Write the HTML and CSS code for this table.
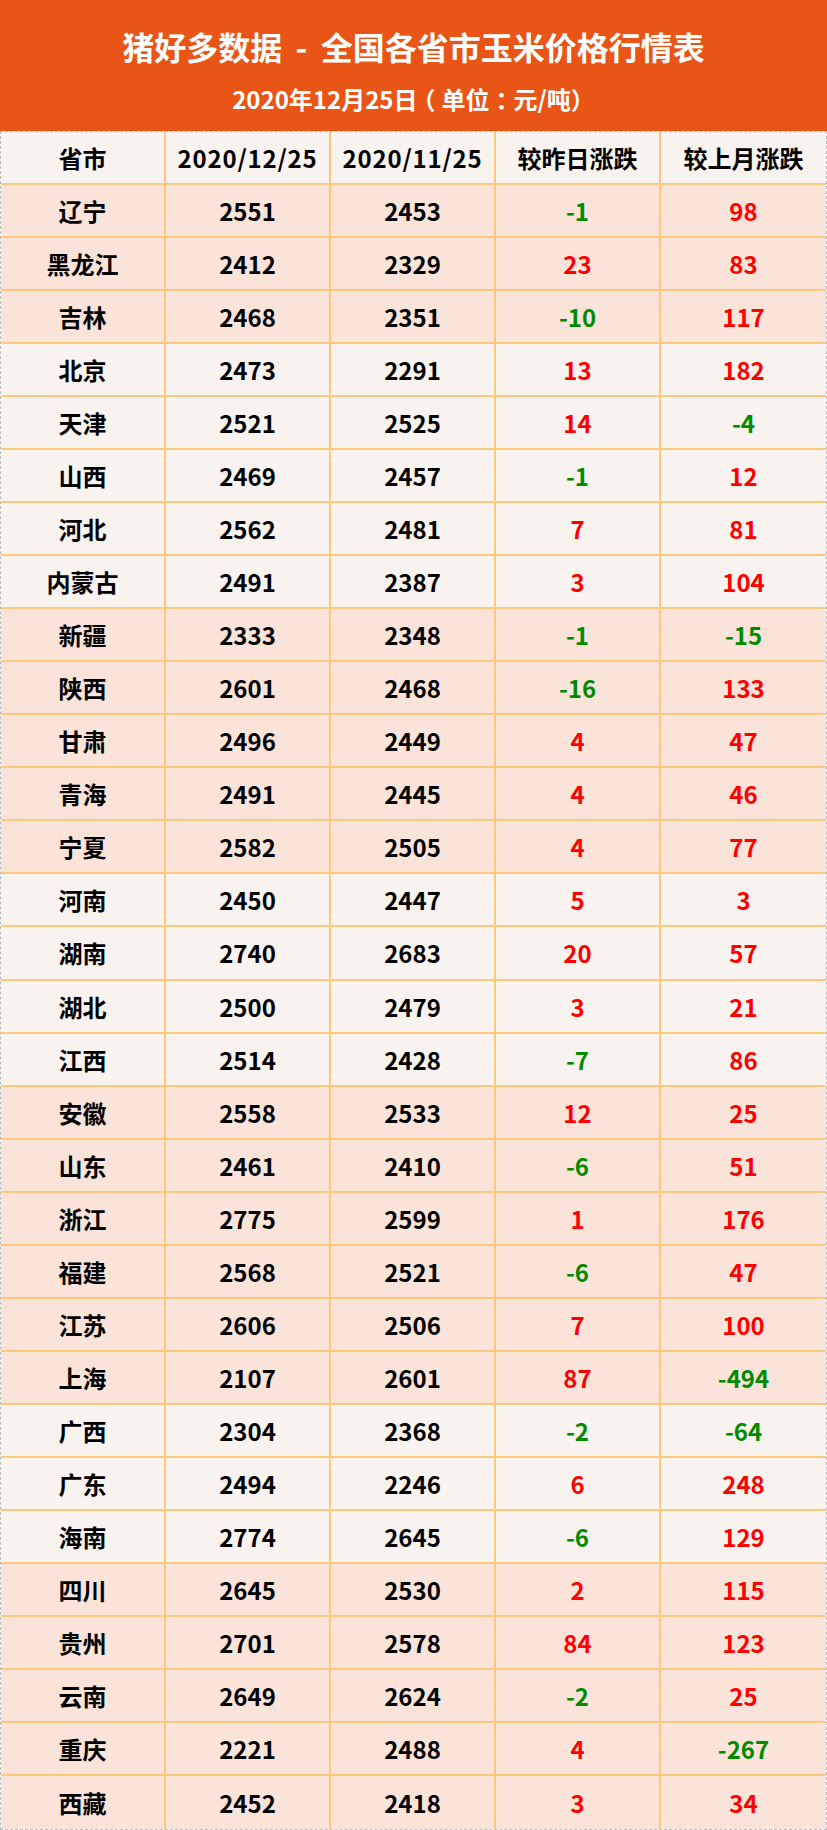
FILE: index.html
```html
<!DOCTYPE html>
<html lang="zh-CN">
<head>
<meta charset="utf-8">
<title>猪好多数据 - 全国各省市玉米价格行情表</title>
<link rel="stylesheet" href="styles.css">
</head>
<body>
<div class="page">
  <header class="banner">
    <h1 class="title">猪好多数据 - 全国各省市玉米价格行情表</h1>
    <p class="subtitle">2020年12月25日<span class="p-open">（</span>单位<span class="p-colon">：</span>元/吨<span class="p-close">）</span></p>
  </header>
  <div class="grid">
    <div class="cell head">省市</div><div class="cell head date">2020/12/25</div><div class="cell head date">2020/11/25</div><div class="cell head">较昨日涨跌</div><div class="cell head last">较上月涨跌</div>

    <div class="cell pink">辽宁</div><div class="cell pink">2551</div><div class="cell pink">2453</div><div class="cell pink down">-1</div><div class="cell pink up last">98</div>
    <div class="cell pink">黑龙江</div><div class="cell pink">2412</div><div class="cell pink">2329</div><div class="cell pink up">23</div><div class="cell pink up last">83</div>
    <div class="cell pink">吉林</div><div class="cell pink">2468</div><div class="cell pink">2351</div><div class="cell pink down">-10</div><div class="cell pink up last">117</div>

    <div class="cell light">北京</div><div class="cell light">2473</div><div class="cell light">2291</div><div class="cell light up">13</div><div class="cell light up last">182</div>
    <div class="cell light">天津</div><div class="cell light">2521</div><div class="cell light">2525</div><div class="cell light up">14</div><div class="cell light down last">-4</div>
    <div class="cell light">山西</div><div class="cell light">2469</div><div class="cell light">2457</div><div class="cell light down">-1</div><div class="cell light up last">12</div>
    <div class="cell light">河北</div><div class="cell light">2562</div><div class="cell light">2481</div><div class="cell light up">7</div><div class="cell light up last">81</div>
    <div class="cell light">内蒙古</div><div class="cell light">2491</div><div class="cell light">2387</div><div class="cell light up">3</div><div class="cell light up last">104</div>

    <div class="cell pink">新疆</div><div class="cell pink">2333</div><div class="cell pink">2348</div><div class="cell pink down">-1</div><div class="cell pink down last">-15</div>
    <div class="cell pink">陕西</div><div class="cell pink">2601</div><div class="cell pink">2468</div><div class="cell pink down">-16</div><div class="cell pink up last">133</div>
    <div class="cell pink">甘肃</div><div class="cell pink">2496</div><div class="cell pink">2449</div><div class="cell pink up">4</div><div class="cell pink up last">47</div>
    <div class="cell pink">青海</div><div class="cell pink">2491</div><div class="cell pink">2445</div><div class="cell pink up">4</div><div class="cell pink up last">46</div>
    <div class="cell pink">宁夏</div><div class="cell pink">2582</div><div class="cell pink">2505</div><div class="cell pink up">4</div><div class="cell pink up last">77</div>

    <div class="cell light">河南</div><div class="cell light">2450</div><div class="cell light">2447</div><div class="cell light up">5</div><div class="cell light up last">3</div>
    <div class="cell light">湖南</div><div class="cell light">2740</div><div class="cell light">2683</div><div class="cell light up">20</div><div class="cell light up last">57</div>
    <div class="cell light">湖北</div><div class="cell light">2500</div><div class="cell light">2479</div><div class="cell light up">3</div><div class="cell light up last">21</div>
    <div class="cell light">江西</div><div class="cell light">2514</div><div class="cell light">2428</div><div class="cell light down">-7</div><div class="cell light up last">86</div>

    <div class="cell pink">安徽</div><div class="cell pink">2558</div><div class="cell pink">2533</div><div class="cell pink up">12</div><div class="cell pink up last">25</div>
    <div class="cell pink">山东</div><div class="cell pink">2461</div><div class="cell pink">2410</div><div class="cell pink down">-6</div><div class="cell pink up last">51</div>
    <div class="cell pink">浙江</div><div class="cell pink">2775</div><div class="cell pink">2599</div><div class="cell pink up">1</div><div class="cell pink up last">176</div>
    <div class="cell pink">福建</div><div class="cell pink">2568</div><div class="cell pink">2521</div><div class="cell pink down">-6</div><div class="cell pink up last">47</div>
    <div class="cell pink">江苏</div><div class="cell pink">2606</div><div class="cell pink">2506</div><div class="cell pink up">7</div><div class="cell pink up last">100</div>
    <div class="cell pink">上海</div><div class="cell pink">2107</div><div class="cell pink">2601</div><div class="cell pink up">87</div><div class="cell pink down last">-494</div>

    <div class="cell light">广西</div><div class="cell light">2304</div><div class="cell light">2368</div><div class="cell light down">-2</div><div class="cell light down last">-64</div>
    <div class="cell light">广东</div><div class="cell light">2494</div><div class="cell light">2246</div><div class="cell light up">6</div><div class="cell light up last">248</div>
    <div class="cell light">海南</div><div class="cell light">2774</div><div class="cell light">2645</div><div class="cell light down">-6</div><div class="cell light up last">129</div>

    <div class="cell pink">四川</div><div class="cell pink">2645</div><div class="cell pink">2530</div><div class="cell pink up">2</div><div class="cell pink up last">115</div>
    <div class="cell pink">贵州</div><div class="cell pink">2701</div><div class="cell pink">2578</div><div class="cell pink up">84</div><div class="cell pink up last">123</div>
    <div class="cell pink">云南</div><div class="cell pink">2649</div><div class="cell pink">2624</div><div class="cell pink down">-2</div><div class="cell pink up last">25</div>
    <div class="cell pink">重庆</div><div class="cell pink">2221</div><div class="cell pink">2488</div><div class="cell pink up">4</div><div class="cell pink down last">-267</div>
    <div class="cell pink bottom">西藏</div><div class="cell pink bottom">2452</div><div class="cell pink bottom">2418</div><div class="cell pink up bottom">3</div><div class="cell pink up last bottom">34</div>
  </div>
</div>
</body>
</html>
```

FILE: styles.css
```css
* { box-sizing: border-box; }
html, body { margin: 0; padding: 0; background: #ffffff; }
body {
  font-family: "Noto Sans CJK SC", "Noto Sans", "Liberation Sans", sans-serif;
  font-weight: 700;
  color: #000;
}
.page { width: 827px; }
.banner {
  height: 131px;
  background: #e95516;
  color: #fff;
  display: flex;
  flex-direction: column;
  align-items: center;
  padding-top: 20px;
}
.title {
  margin: 0;
  font-size: 32px;
  line-height: 52px;
  font-weight: 700;
  word-spacing: 6px;
}
.subtitle {
  margin: 4px 0 0;
  font-size: 24px;
  line-height: 46px;
  font-weight: 700;
}
.p-open { margin: 0 6px 0 -6px; }
.p-colon { margin: 0 -6px 0 6px; }
.p-close { margin: 0; }
.grid {
  height: 1699px;
  border: 1px dashed #b9b9b9;
  display: grid;
  grid-template-columns: 165px 165px 165px 165px 1fr;
  grid-template-rows: repeat(32, 1fr);
}
.cell {
  display: flex;
  align-items: center;
  justify-content: center;
  font-size: 24px;
  border-right: 2px solid #fdc97c;
  border-bottom: 2px solid #fdc97c;
  line-height: 1;
  padding-top: 1px;
}
.cell.last { border-right: none; }
.cell.bottom { border-bottom: none; }
.date { letter-spacing: 0.8px; }
.head { background: #f9f3ef; }
.light { background: #f9f3ef; }
.pink { background: #fae4d9; }
.up { color: #ff0000; }
.down { color: #008a00; }
```
